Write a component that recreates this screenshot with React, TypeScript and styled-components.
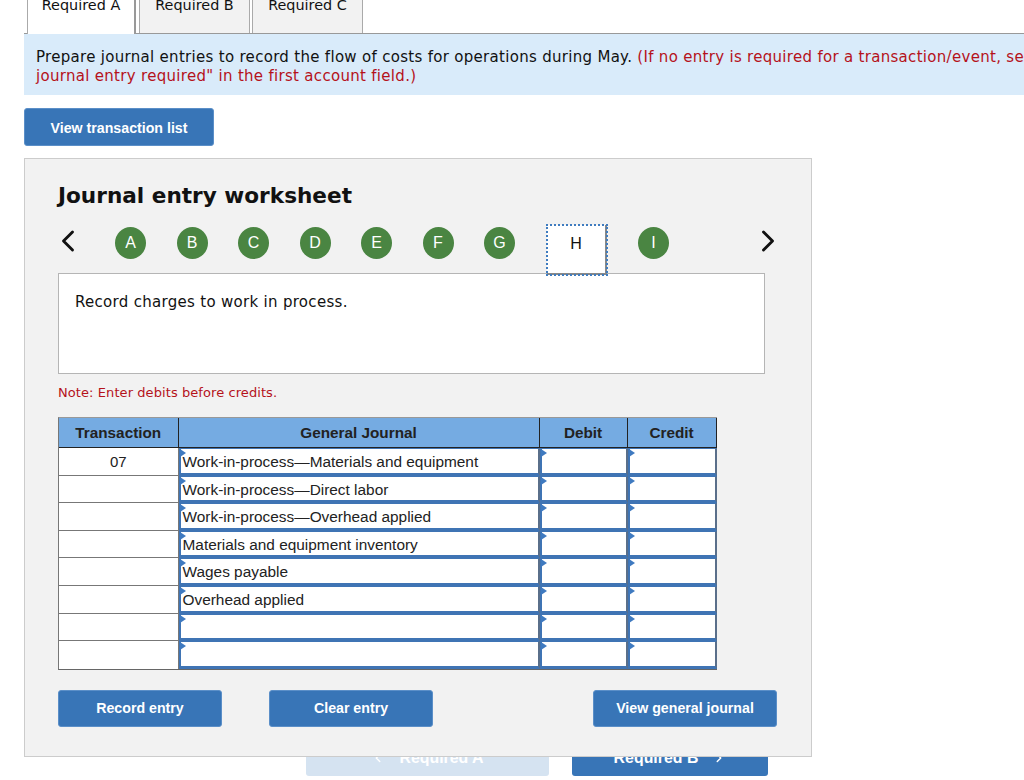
import React from 'react';
import styled, { createGlobalStyle } from 'styled-components';
import { ChevronLeft, ChevronRight } from 'lucide-react';

const GlobalStyle = createGlobalStyle`
  html, body {
    margin: 0;
    width: 1024px;
    height: 780px;
    overflow: hidden;
    background: #fff;
  }
`;

const SPage = styled.div`
  width: 1024px;
  height: 780px;
  overflow: hidden;
  padding-left: 24px;
  box-sizing: border-box;
  font-family: 'DejaVu Sans', Verdana, sans-serif;
  color: #111;
`;
const STabs = styled.div`
  display: flex;
  height: 34px;
  box-sizing: border-box;
  padding-left: 3px;
  border-bottom: 1px solid #999;
`;
const STab = styled.div<{ $active?: boolean }>`
  box-sizing: border-box;
  width: ${({ $active }) => ($active ? '109px' : '111px')};
  height: ${({ $active }) => ($active ? '34px' : '33px')};
  margin-right: ${({ $active }) => ($active ? '3px' : '2px')};
  background: ${({ $active }) => ($active ? '#fff' : '#f2f2f2')};
  border-left: 1px solid #aaa;
  border-right: 1px solid #aaa;
  ${({ $active }) => $active && 'border-right: 2px solid #999;'}
  font-size: 14.4px;
  line-height: 11px;
  text-align: center;
`;
const SBanner = styled.div`
  width: 1000px;
  height: 61px;
  box-sizing: border-box;
  padding: 14px 12px 0;
  overflow: hidden;
  background: #d9ebfa;
  font-size: 15px;
  letter-spacing: 0.3px;
  line-height: 19px;
  white-space: nowrap;
`;
const SRed = styled.span`
  color: #b5121b;
`;
const SButton = styled.button<{ $width: number; $left?: number }>`
  display: block;
  flex: none;
  width: ${({ $width }) => $width}px;
  height: 38px;
  margin-left: ${({ $left }) => $left ?? 0}px;
  padding: 1px 0 0;
  background: #3875b7;
  border: 1px solid #5b8fc8;
  border-radius: 3px;
  color: #fff;
  font: bold 14.2px 'Liberation Sans', Arial, sans-serif;
`;
const SActionButton = styled(SButton)`
  height: 37px;
  padding: 0;
`;
const STopAction = styled.div`
  margin: 13px 0 12px;
`;
const SPanel = styled.div`
  position: relative;
  z-index: 1;
  width: 788px;
  height: 599px;
  box-sizing: border-box;
  padding: 22px 33px 0;
  background: #f2f2f2;
  border: 1.5px solid #ccc;
`;
const STitle = styled.h2`
  margin: 0;
  height: 30px;
  font-size: 21.6px;
  line-height: 30px;
  font-weight: bold;
  color: #111;
`;
const SNav = styled.div`
  display: flex;
  align-items: flex-start;
  height: 48px;
  margin-top: 14px;
`;
const SArrow = styled.div<{ $right?: boolean }>`
  flex: none;
  width: 20px;
  height: 32px;
  margin-left: ${({ $right }) => ($right ? '58.5px' : '0')};
  margin-right: ${({ $right }) => ($right ? '0' : '37px')};
  display: flex;
  align-items: center;
  justify-content: center;
  color: #111;
  svg {
    flex: none;
  }
`;
const SCircle = styled.div`
  flex: none;
  width: 31px;
  height: 32px;
  margin: 2px 30.5px 0 0;
  border-radius: 50%;
  background: #4a8542;
  color: #fff;
  font: 16px/32px 'Liberation Sans', Arial, sans-serif;
  text-align: center;
`;
const SActiveStep = styled.div`
  position: relative;
  z-index: 1;
  flex: none;
  box-sizing: border-box;
  width: 60px;
  height: 50px;
  margin: 0 31px 0 1.5px;
  background: #fff;
  border-right: 2px solid #888;
  border-bottom: 2px solid #888;
  outline: 2px dotted #3f7cc0;
  outline-offset: -1px;
  color: #111;
  font: 16px/37px 'Liberation Sans', Arial, sans-serif;
  text-align: center;
`;
const SDescription = styled.div`
  box-sizing: border-box;
  width: 707px;
  height: 101px;
  padding: 18px 16px;
  background: #fff;
  border: 1px solid #b5b5b5;
  font-size: 15px;
  letter-spacing: 0.3px;
  line-height: 20px;
`;
const SNote = styled.div`
  margin-top: 10px;
  height: 17px;
  font-size: 13px;
  letter-spacing: 0.08px;
  line-height: 17px;
  color: #b5121b;
`;
const STable = styled.div`
  display: grid;
  grid-template-columns: 119.5px 361px 88px 89px;
  grid-template-rows: 30px repeat(8, 27.6px);
  width: 657.5px;
  margin-top: 16px;
  border-top: 1px solid #999;
  border-bottom: 1px solid #666;
  border-left: 1px solid #777;
  font-family: 'Liberation Sans', Arial, sans-serif;
`;
const SHeadCell = styled.div`
  box-sizing: border-box;
  background: #75abe2;
  border-right: 1px solid #222;
  border-bottom: 1px solid #222;
  font-size: 15.3px;
  font-weight: bold;
  line-height: 29px;
  text-align: center;
  color: #222;
`;
const STransactionCell = styled.div`
  box-sizing: border-box;
  background: #fff;
  border-bottom: 1px solid #777;
  border-right: 1px solid #777;
  font-size: 15px;
  line-height: 27px;
  text-align: center;
  color: #222;
  &:nth-last-child(-n + 4) {
    border-bottom: 0;
  }
`;
const SInputCell = styled.div`
  position: relative;
  box-sizing: border-box;
  background: #fff;
  border: 2px solid #3f74b4;
  border-top-width: 1px;
  border-bottom-width: 3px;
  border-right: 2px solid #5a6f8a;
  padding-left: 2px;
  font-size: 15.4px;
  line-height: 26px;
  white-space: nowrap;
  color: #222;
  &::before {
    content: '';
    position: absolute;
    top: 0;
    left: -1px;
    border-left: 6px solid #3f7ac0;
    border-top: 4px solid transparent;
    border-bottom: 4px solid transparent;
  }
`;
const SActions = styled.div`
  display: flex;
  margin-top: 20px;
`;
const SFooter = styled.div`
  display: flex;
  margin-top: -18px;
`;
const SFooterButton = styled.div<{ $disabled?: boolean; $width: number; $left: number }>`
  display: flex;
  align-items: center;
  justify-content: center;
  gap: 14px;
  box-sizing: border-box;
  width: ${({ $width }) => $width}px;
  height: 37px;
  margin-left: ${({ $left }) => $left}px;
  background: ${({ $disabled }) => ($disabled ? '#d5e3f1' : '#3875b7')};
  border-radius: 3px;
  color: #fff;
  font: bold 15.9px 'Liberation Sans', Arial, sans-serif;
`;

const steps = ['A', 'B', 'C', 'D', 'E', 'F', 'G'];
const accounts = [
  'Work-in-process—Materials and equipment',
  'Work-in-process—Direct labor',
  'Work-in-process—Overhead applied',
  'Materials and equipment inventory',
  'Wages payable',
  'Overhead applied',
  '',
  '',
];

export default function App() {
  return (
    <SPage>
      <GlobalStyle />
      <STabs>
        <STab $active>Required A</STab>
        <STab>Required B</STab>
        <STab>Required C</STab>
      </STabs>
      <SBanner>
        Prepare journal entries to record the flow of costs for operations during May.{' '}
        <SRed>
          (If no entry is required for a transaction/event, select "No
          <br />
          journal entry required" in the first account field.)
        </SRed>
      </SBanner>
      <STopAction>
        <SButton $width={190}>View transaction list</SButton>
      </STopAction>
      <SPanel>
        <STitle>Journal entry worksheet</STitle>
        <SNav>
          <SArrow>
            <ChevronLeft size={36} strokeWidth={1.9} />
          </SArrow>
          {steps.map((s) => (
            <SCircle key={s}>{s}</SCircle>
          ))}
          <SActiveStep>H</SActiveStep>
          <SCircle>I</SCircle>
          <SArrow $right>
            <ChevronRight size={36} strokeWidth={1.9} />
          </SArrow>
        </SNav>
        <SDescription>Record charges to work in process.</SDescription>
        <SNote>Note: Enter debits before credits.</SNote>
        <STable>
          <SHeadCell>Transaction</SHeadCell>
          <SHeadCell>General Journal</SHeadCell>
          <SHeadCell>Debit</SHeadCell>
          <SHeadCell>Credit</SHeadCell>
          {accounts.map((account, i) => (
            <React.Fragment key={i}>
              <STransactionCell>{i === 0 ? '07' : ''}</STransactionCell>
              <SInputCell>{account}</SInputCell>
              <SInputCell />
              <SInputCell />
            </React.Fragment>
          ))}
        </STable>
        <SActions>
          <SActionButton $width={164}>Record entry</SActionButton>
          <SActionButton $width={164} $left={47}>Clear entry</SActionButton>
          <SActionButton $width={184} $left={160}>View general journal</SActionButton>
        </SActions>
      </SPanel>
      <SFooter>
        <SFooterButton $disabled $width={243} $left={282}>
          <ChevronLeft size={14} strokeWidth={2.5} />
          Required A
        </SFooterButton>
        <SFooterButton $width={196} $left={23}>
          Required B
          <ChevronRight size={14} strokeWidth={2.5} />
        </SFooterButton>
      </SFooter>
    </SPage>
  );
}
